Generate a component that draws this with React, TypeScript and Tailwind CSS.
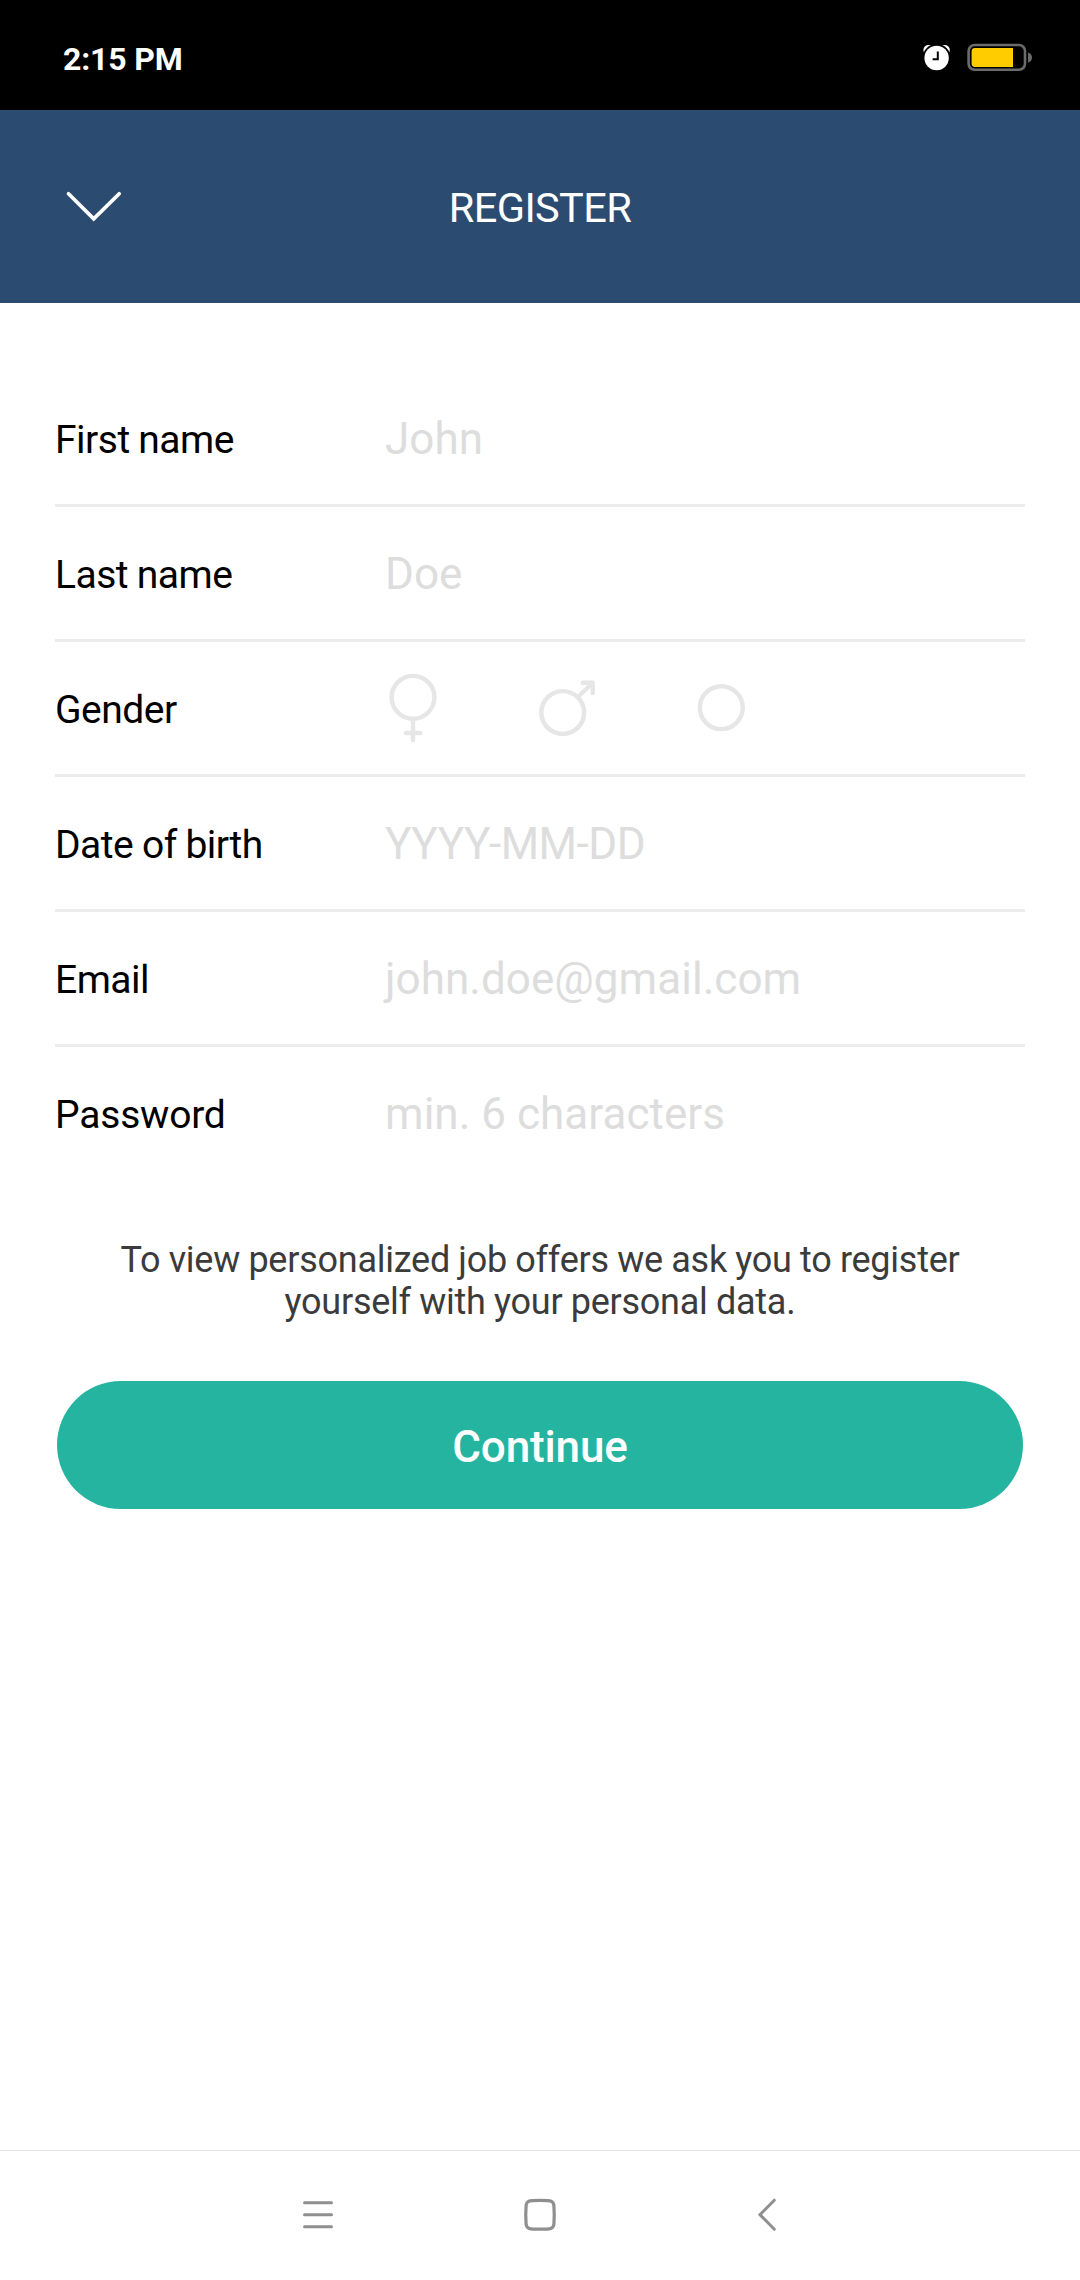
import type { ReactNode } from 'react'

function StatusBar() {
  return (
    <div className="flex h-[110px] items-center justify-between bg-black pr-[44px] pl-[63px] text-white">
      <span className="pt-[7px] text-[32px] leading-none font-bold tracking-[-0.15px]">2:15 PM</span>
      <svg width="116" height="40" viewBox="920 38 116 40" className="mt-[6px]">
        <circle cx="928.4" cy="50" r="5" fill="#fff" />
        <circle cx="944.8" cy="50" r="5" fill="#fff" />
        <circle cx="936.6" cy="58" r="14" fill="#000" />
        <circle cx="936.6" cy="58" r="12.2" fill="#fff" />
        <path d="M937.8 51.5V59.2H932.6" fill="none" stroke="#000" strokeWidth="2" />
        <rect x="968.6" y="45" width="56.4" height="24.8" rx="6" fill="none" stroke="#6b6b6b" strokeWidth="2.6" />
        <path d="M1013 48V67H975a3.4 3.4 0 0 1-3.4-3.4V51.4A3.4 3.4 0 0 1 975 48Z" fill="#ffcc00" />
        <path d="M1028 52.6c2.6 .8 4 2.6 4 5s-1.4 4.3-4 5.1Z" fill="#6b6b6b" />
      </svg>
    </div>
  )
}

function Header() {
  return (
    <header className="grid h-[193px] grid-cols-[1fr_auto_1fr] items-center bg-[#2c4b70] text-white">
      <svg width="60" height="36" viewBox="0 0 60 36" className="ml-16" fill="none" stroke="#fff" strokeWidth="3.7" strokeLinecap="round">
        <path d="M4.5 4.7L29.7 29.9L55.2 4.7" />
      </svg>
      <h1 className="pt-[3px] text-[41.5px] leading-none tracking-[-0.6px]">REGISTER</h1>
    </header>
  )
}

function Row({ label, last, children }: { label: string; last?: boolean; children: ReactNode }) {
  return (
    <div className={last ? 'flex h-[132px] items-center tracking-[-0.2px]' : 'flex h-[135px] items-center border-b-3 border-[#ececec] tracking-[-0.5px]'}>
      <span className="w-[330px] shrink-0 pt-1 text-[39px] leading-none text-black [word-spacing:-0.5px]">
        {label}
      </span>
      {children}
    </div>
  )
}

function Hint({ text, tight }: { text: string; tight?: boolean }) {
  return (
    <span className={tight ? 'pt-px text-[44px] leading-none tracking-[-0.45px] text-[#dddddd]' : 'pt-px text-[44px] leading-none tracking-[0.04px] text-[#dddddd]'}>
      {text}
    </span>
  )
}

function GenderIcon({ children }: { children: ReactNode }) {
  return (
    <svg width="60" height="84" viewBox="0 0 60 84" fill="none" stroke="#e6e6e6" strokeWidth="4.4" strokeLinecap="round" strokeLinejoin="round">
      {children}
    </svg>
  )
}

function NavBar() {
  return (
    <nav className="flex h-[130px] items-start border-t border-[#e2e2e2] bg-white pt-11 pl-[298px]">
      <svg width="40" height="40" viewBox="0 0 40 40" fill="none" stroke="#8f8f8f" strokeWidth="3" strokeLinecap="round">
        <path d="M6.5 7.7H33.5M6.5 19.7H33.5M6.5 31.7H33.5" />
      </svg>
      <svg width="40" height="40" viewBox="0 0 40 40" className="ml-[182px]" fill="none" stroke="#8f8f8f" strokeWidth="3.2">
        <path d="M20 5.4C26 5.4 29.5 5.5 31.2 6.2C33 7 33.7 8.3 33.9 10.5C34.3 16 34.3 24 33.9 29.1C33.7 31.5 32.7 33 30.5 33.6C27.5 34.4 12.5 34.4 9.5 33.6C7.3 33 6.3 31.5 6.1 29.1C5.7 24 5.7 16 6.1 10.5C6.3 8.3 7 7 8.8 6.2C10.5 5.5 14 5.4 20 5.4Z" />
      </svg>
      <svg width="40" height="40" viewBox="0 0 40 40" className="ml-[187px]" fill="none" stroke="#8f8f8f" strokeWidth="3" strokeLinecap="round">
        <path d="M27.3 5.2L13 19.7L27.3 34.2" />
      </svg>
    </nav>
  )
}

export default function App() {
  return (
    <div className="flex h-[2280px] w-[1080px] flex-col bg-white font-[Roboto,sans-serif]">
      <StatusBar />
      <Header />
      <main className="flex flex-1 flex-col px-[55px] pt-[69px]">
        <Row label="First name">
          <Hint text="John" />
        </Row>
        <Row label="Last name">
          <Hint text="Doe" />
        </Row>
        <Row label="Gender">
          <div className="flex gap-[92px]">
            <GenderIcon>
              <circle cx="28" cy="31.3" r="21.4" />
              <path d="M28 53V74M21 67H35.2" />
            </GenderIcon>
            <GenderIcon>
              <circle cx="25.7" cy="46.5" r="21.4" />
              <path d="M41.5 30.5L55 17.5M45.7 16.7H55.7V27" />
            </GenderIcon>
            <GenderIcon>
              <circle cx="32.3" cy="41.7" r="21.4" />
            </GenderIcon>
          </div>
        </Row>
        <Row label="Date of birth">
          <Hint text="YYYY-MM-DD" tight />
        </Row>
        <Row label="Email">
          <Hint text="john.doe@gmail.com" />
        </Row>
        <Row label="Password" last>
          <Hint text="min. 6 characters" />
        </Row>
        <p className="mt-[60px] text-center text-[36px] leading-[42.4px] tracking-[-0.25px] text-[#3b3b3b] [word-spacing:-0.3px]">
          To view personalized job offers we ask you to register
          <br />
          yourself with your personal data.
        </p>
        <button className="mx-0.5 mt-[57px] h-32 rounded-full bg-[#25b4a0] pt-1 text-[44px] leading-none font-medium tracking-[-0.15px] text-white">
          Continue
        </button>
      </main>
      <NavBar />
    </div>
  )
}
